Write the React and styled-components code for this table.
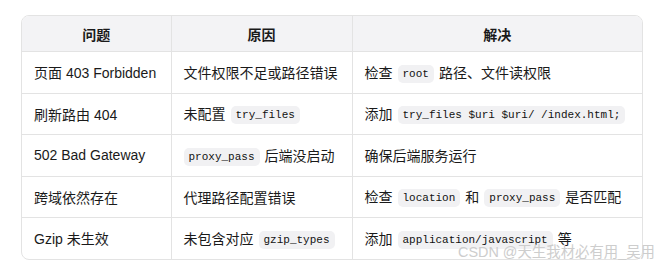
import React from "react";
import styled, { createGlobalStyle } from "styled-components";

const GlobalStyle = createGlobalStyle`
  body {
    margin: 0;
    background: #ffffff;
    font-family: "Liberation Sans", Arial, "Noto Sans CJK SC", sans-serif;
    color: #1a1a1a;
  }
`;

const Page = styled.div`
  position: relative;
  width: 665px;
  height: 267px;
  padding: 15px 22px 0 21px;
  box-sizing: border-box;
`;

const Frame = styled.div`
  border: 1px solid #e3e3e3;
  border-radius: 8px;
  overflow: hidden;
`;

const Table = styled.table`
  width: 100%;
  border-collapse: collapse;
  table-layout: fixed;
  font-size: 14px;
`;

const HeadCell = styled.th`
  height: 35px;
  background: #f3f3f5;
  font-weight: 700;
  text-align: center;
  padding: 0;
  border-left: ${({ $first }) => ($first ? "none" : "1px solid #e3e3e3")};
`;

const Row = styled.tr`
  border-top: 1px solid #e3e3e3;
`;

const Cell = styled.td`
  height: 40.5px;
  padding: 0 12px;
  white-space: nowrap;
  border-left: ${({ $first }) => ($first ? "none" : "1px solid #e3e3e3")};
`;

const Code = styled.code`
  display: inline-block;
  font-family: "Liberation Mono", "DejaVu Sans Mono", monospace;
  font-size: 11px;
  line-height: 18px;
  padding: 0 5px;
  margin: 0 5px;
  background: #f1f1f3;
  border-radius: 5px;
  vertical-align: 1px;
  color: #111111;
  &:first-child {
    margin-left: 0;
  }
`;

const Mark = styled.div`
  position: absolute;
  right: 10px;
  bottom: 6px;
  font-size: 14.4px;
  color: #cdcdcd;
  white-space: nowrap;
`;

const rows = [
  ["页面 403 Forbidden", ["文件权限不足或路径错误"], ["检查", { c: "root" }, "路径、文件读权限"]],
  ["刷新路由 404", ["未配置", { c: "try_files" }], ["添加", { c: "try_files $uri $uri/ /index.html;" }]],
  ["502 Bad Gateway", [{ c: "proxy_pass" }, "后端没启动"], ["确保后端服务运行"]],
  ["跨域依然存在", ["代理路径配置错误"], ["检查", { c: "location" }, "和", { c: "proxy_pass" }, "是否匹配"]],
  ["Gzip 未生效", ["未包含对应", { c: "gzip_types" }], ["添加", { c: "application/javascript" }, "等"]],
];

const renderParts = (parts) =>
  parts.map((p, i) =>
    typeof p === "string" ? <span key={i}>{p}</span> : <Code key={i}>{p.c}</Code>
  );

export default function App() {
  return (
    <>
      <GlobalStyle />
      <Page>
        <Frame>
          <Table>
            <colgroup>
              <col style={{ width: 149 }} />
              <col style={{ width: 181 }} />
              <col />
            </colgroup>
            <thead>
              <tr>
                <HeadCell $first>问题</HeadCell>
                <HeadCell>原因</HeadCell>
                <HeadCell>解决</HeadCell>
              </tr>
            </thead>
            <tbody>
              {rows.map((r, i) => (
                <Row key={i}>
                  <Cell $first>{r[0]}</Cell>
                  <Cell>{renderParts(r[1])}</Cell>
                  <Cell>{renderParts(r[2])}</Cell>
                </Row>
              ))}
            </tbody>
          </Table>
        </Frame>
        <Mark>CSDN @天生我材必有用_吴用</Mark>
      </Page>
    </>
  );
}
